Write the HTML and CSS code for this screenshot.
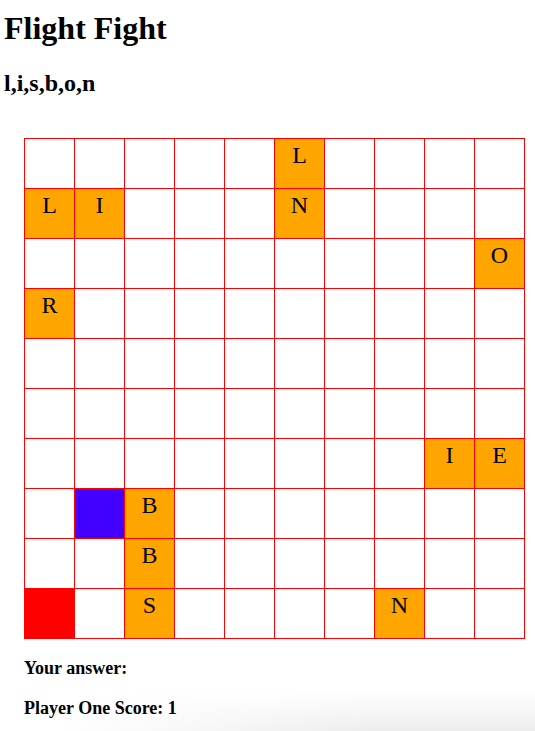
FILE: index.html
```html
<!DOCTYPE html>
<html lang="en">
<head>
    <meta charset="UTF-8">
    <title>Flight Fight</title>
    <link rel="stylesheet" href="styles.css">
</head>
<body>
    <h1>Flight Fight</h1>
    <h2 id="word">l,i,s,b,o,n</h2>

    <!-- Game board -->
    <div id="board" class="board"></div>

    <div class="status">
        <p class="label">Your answer:</p>
        <p class="label">Player One Score: <span id="score">1</span></p>
    </div>

    <script>
        // '.' = empty, '#' = player, '*' = enemy, letters = tiles
        const rows = [
            '.....L....',
            'LI...N....',
            '.........O',
            'R.........',
            '..........',
            '..........',
            '........IE',
            '.#B.......',
            '..B.......',
            '*.S....N..'
        ];

        const board = document.getElementById('board');
        rows.forEach(function (row) {
            for (let ch of row) {
                let cell = document.createElement('div');
                cell.className = 'cell';
                if (ch === '#') {
                    cell.classList.add('player');
                } else if (ch === '*') {
                    cell.classList.add('enemy');
                } else if (ch !== '.') {
                    cell.classList.add('tile');
                    cell.textContent = ch;
                }
                board.appendChild(cell);
            }
        });
    </script>
</body>
</html>
```

FILE: styles.css
```css
/* General */
body {
    font-family: "Liberation Serif", "Times New Roman", serif;
    margin: 0 4px;
    color: #000;
    background-color: #fff;
}

/* faint shade at the bottom of the window */
body::after {
    content: "";
    position: fixed;
    left: 0;
    right: 0;
    bottom: 0;
    height: 40px;
    background: linear-gradient(to bottom, rgba(0, 0, 0, 0), rgba(0, 0, 0, 0.07));
    -webkit-mask-image: linear-gradient(to right, transparent 10%, #000 70%);
    mask-image: linear-gradient(to right, transparent 10%, #000 70%);
    pointer-events: none;
}

/* Headers */
h1 {
    font-size: 32px;
    line-height: 36px;
    margin: 10px 0 0;
}

h2 {
    font-size: 24px;
    line-height: 27px;
    margin: 24px 0 0;
}

/* Board */
.board {
    display: grid;
    grid-template-columns: repeat(10, 49px);
    grid-auto-rows: 49px;
    gap: 1px;
    padding: 1px;
    width: max-content;
    margin: 41px 0 0 20px;
    background-color: #ff0000;
}

.cell {
    background-color: #fff;
    font-size: 24px;
    line-height: 27px;
    text-align: center;
    padding-top: 3px;
    box-sizing: border-box;
}

.tile {
    background-color: #ffa500;
}

.player {
    background-color: #4400ff;
}

.enemy {
    background-color: #ff0000;
}

/* Status */
.status {
    margin: 19px 0 0 20px;
}

.label {
    font-size: 18px;
    font-weight: bold;
    line-height: 20px;
    margin: 0 0 20px;
}
```
